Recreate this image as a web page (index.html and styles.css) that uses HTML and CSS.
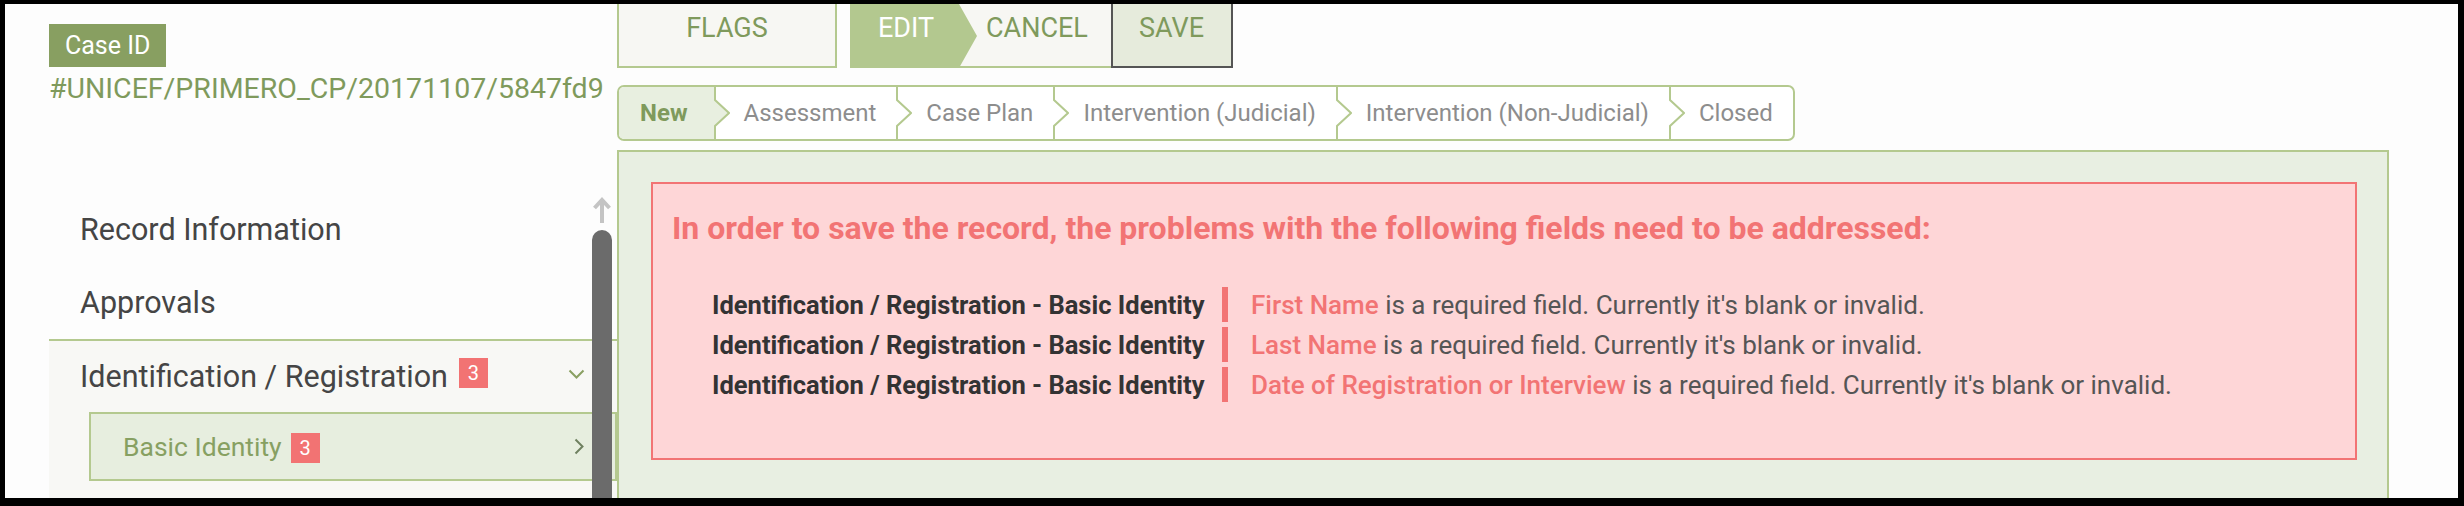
FILE: index.html
```html
<!DOCTYPE html>
<html lang="en">
<head>
<meta charset="utf-8">
<title>Case record</title>
<link rel="stylesheet" href="styles.css">
</head>
<body>
<div class="frame">
  <aside class="sidebar">
    <span class="case-label">Case ID</span>
    <div class="case-number">#UNICEF/PRIMERO_CP/20171107/5847fd9</div>
    <nav class="nav">
      <div class="nav-item">Record Information</div>
      <div class="nav-item">Approvals</div>
      <div class="nav-group">
        <div class="nav-item group-head">
          <span>Identification / Registration</span>
          <span class="badge badge-up">3</span>
          <svg class="chev-down" width="17" height="11" viewBox="0 0 17 11"><path d="M1.5 1.5 L8.5 8.5 L15.5 1.5" fill="none" stroke="#8aa062" stroke-width="2"/></svg>
        </div>
        <div class="sub-item">
          <span>Basic Identity</span>
          <span class="badge">3</span>
          <svg class="chev-right" width="11" height="17" viewBox="0 0 11 17"><path d="M1.5 1.5 L8.5 8.5 L1.5 15.5" fill="none" stroke="#6f8060" stroke-width="2"/></svg>
        </div>
      </div>
      <div class="scrollbar">
        <svg class="scroll-up" width="20" height="26" viewBox="0 0 20 26"><path d="M2.5 11 L10 3 L17.5 11 M10 3.5 V26" fill="none" stroke="#c4c4c4" stroke-width="4"/></svg>
        <div class="thumb"></div>
      </div>
    </nav>
  </aside>

  <main class="main">
    <div class="toolbar">
      <div class="btn btn-flags">FLAGS</div>
      <div class="btn btn-edit">EDIT</div>
      <div class="btn btn-cancel">CANCEL</div>
      <div class="btn btn-save">SAVE</div>
    </div>

    <div class="stepper">
      <div class="step step-active">New</div>
      <svg class="sep" width="16" height="52" viewBox="0 0 16 52"><path d="M0 0 H1 V13 L15 26 L1 39 V52 H0 Z" fill="#e8efe0"/><path d="M1 0 V13 L15 26 L1 39 V52" fill="none" stroke="#b4c98f" stroke-width="2"/></svg>
      <div class="step">Assessment</div>
      <svg class="sep" width="16" height="52" viewBox="0 0 16 52"><path d="M1 0 V13 L15 26 L1 39 V52" fill="none" stroke="#b4c98f" stroke-width="2"/></svg>
      <div class="step">Case Plan</div>
      <svg class="sep" width="16" height="52" viewBox="0 0 16 52"><path d="M1 0 V13 L15 26 L1 39 V52" fill="none" stroke="#b4c98f" stroke-width="2"/></svg>
      <div class="step">Intervention (Judicial)</div>
      <svg class="sep" width="16" height="52" viewBox="0 0 16 52"><path d="M1 0 V13 L15 26 L1 39 V52" fill="none" stroke="#b4c98f" stroke-width="2"/></svg>
      <div class="step">Intervention (Non-Judicial)</div>
      <svg class="sep" width="16" height="52" viewBox="0 0 16 52"><path d="M1 0 V13 L15 26 L1 39 V52" fill="none" stroke="#b4c98f" stroke-width="2"/></svg>
      <div class="step step-last">Closed</div>
    </div>

    <section class="panel">
      <div class="error-box">
        <h2 class="error-title">In order to save the record, the problems with the following fields need to be addressed:</h2>
        <div class="error-rows">
          <div class="error-row">
            <span class="error-section">Identification / Registration - Basic Identity</span>
            <span class="error-bar"></span>
            <span class="error-msg"><span class="field">First Name</span> is a required field. Currently it's blank or invalid.</span>
          </div>
          <div class="error-row">
            <span class="error-section">Identification / Registration - Basic Identity</span>
            <span class="error-bar"></span>
            <span class="error-msg"><span class="field">Last Name</span> is a required field. Currently it's blank or invalid.</span>
          </div>
          <div class="error-row">
            <span class="error-section">Identification / Registration - Basic Identity</span>
            <span class="error-bar"></span>
            <span class="error-msg"><span class="field">Date of Registration or Interview</span> is a required field. Currently it's blank or invalid.</span>
          </div>
        </div>
      </div>
    </section>
  </main>
</div>
</body>
</html>
```

FILE: styles.css
```css
html, body {
  margin: 0;
  padding: 0;
  background: #000;
  height: 506px;
  overflow: hidden;
}

.frame {
  margin: 4px 0 0 5px;
  width: 2453px;
  height: 494px;
  background: #fdfdfd;
  display: flex;
  overflow: hidden;
  font-family: Roboto, "Liberation Sans", Arial, sans-serif;
}

/* ---------- sidebar ---------- */
.sidebar {
  flex: none;
  width: 612px;
  box-sizing: border-box;
  padding-left: 44px;
  display: flex;
  flex-direction: column;
}

.case-label {
  align-self: flex-start;
  margin-top: 20px;
  height: 43px;
  line-height: 43px;
  padding: 0 16px;
  background: #889f61;
  color: #fff;
  font-size: 25px;
}

.case-number {
  margin-top: 5px;
  font-size: 28.5px;
  line-height: 34px;
  color: #7f9a5c;
  white-space: nowrap;
}

.nav {
  position: relative;
  margin-top: 87px;
  flex: 1;
}

.nav-item {
  height: 73px;
  display: flex;
  align-items: center;
  padding-left: 31px;
  font-size: 30.5px;
  color: #454545;
}

.nav-group {
  border-top: 2px solid #b4c98f;
  background: #f8f8f5;
  height: 400px;
}

.group-head {
  height: 71px;
}

.badge {
  display: inline-block;
  width: 29px;
  height: 30px;
  line-height: 30px;
  text-align: center;
  background: #f27373;
  color: #fff;
  font-size: 20px;
  margin-left: 11px;
}

.badge-up {
  margin-bottom: 7px;
}

.chev-down {
  margin-left: auto;
  margin-right: 32px;
  margin-bottom: 4px;
}

.sub-item {
  margin-left: 40px;
  height: 69px;
  box-sizing: border-box;
  border: 2px solid #b4c98f;
  background: #e7eedf;
  display: flex;
  align-items: center;
  padding-left: 32px;
  font-size: 26.5px;
  color: #87a062;
}

.sub-item .badge {
  margin-left: 9px;
  margin-top: 3px;
}

.chev-right {
  margin-left: auto;
  margin-right: 30px;
}

.scrollbar {
  position: absolute;
  top: 4px;
  right: 5px;
  width: 20px;
  display: flex;
  flex-direction: column;
  align-items: center;
}

.scroll-up {
  display: block;
}

.thumb {
  margin-top: 7px;
  width: 20px;
  height: 320px;
  border-radius: 10px 10px 0 0;
  background: #6b6b6b;
}

/* ---------- main ---------- */
.main {
  flex: none;
  width: 1772px;
  display: flex;
  flex-direction: column;
}

.toolbar {
  display: flex;
  height: 64px;
}

.btn {
  box-sizing: border-box;
  height: 64px;
  font-size: 27px;
  line-height: 48px;
  color: #7f9a5c;
  white-space: nowrap;
}

.btn-flags {
  width: 220px;
  text-align: center;
  background: #f7f7f3;
  border: 2px solid #b4c98f;
  border-top: none;
}

.btn-edit {
  position: relative;
  z-index: 1;
  margin-left: 13px;
  width: 127px;
  padding-left: 28px;
  background: #b3c88f;
  color: #fff;
  clip-path: polygon(0 0, 109px 0, 127px 50%, 109px 100%, 0 100%);
}

.btn-cancel {
  margin-left: -18px;
  width: 152px;
  padding-left: 27px;
  background: #f7f7f3;
  border-bottom: 2px solid #b4c98f;
}

.btn-save {
  width: 122px;
  padding-left: 26px;
  background: #e6ebdc;
  border: 2px solid #555;
  border-top: none;
}

.stepper {
  align-self: flex-start;
  margin-top: 17px;
  height: 56px;
  box-sizing: border-box;
  border: 2px solid #b4c98f;
  border-radius: 7px;
  overflow: hidden;
  display: flex;
  background: #fff;
}

.step {
  display: flex;
  align-items: center;
  padding: 0 20px 0 14px;
  font-size: 24px;
  color: #8d8d8d;
  white-space: nowrap;
}

.step-active {
  padding-left: 21px;
  padding-right: 26px;
  background: #e8efe0;
  color: #7f9a5c;
  font-weight: 700;
}

.step-last {
  padding-right: 20px;
}

.sep {
  display: block;
  flex: none;
}

.panel {
  flex: 1;
  margin-top: 9px;
  border: 2px solid #b4c98f;
  border-bottom: none;
  background: #e8efe2;
  padding: 30px 30px 0 32px;
}

.error-box {
  border: 2px solid #f27474;
  background: #fed6d7;
  padding: 25px 20px 56px 19px;
}

.error-title {
  margin: 0;
  font-size: 32px;
  line-height: 38px;
  font-weight: 700;
  color: #f27474;
  white-space: nowrap;
}

.error-rows {
  margin-top: 40px;
  padding-left: 40px;
}

.error-row {
  display: flex;
  align-items: center;
  height: 35px;
}

.error-row + .error-row {
  margin-top: 5px;
}

.error-section {
  width: 493px;
  font-size: 25.5px;
  font-weight: 700;
  color: #333;
  white-space: nowrap;
}

.error-bar {
  align-self: stretch;
  width: 6px;
  margin-left: 17px;
  background: #f27474;
}

.error-msg {
  margin-left: 23px;
  font-size: 26px;
  color: #555;
  white-space: nowrap;
}

.field {
  color: #f27474;
  font-weight: 500;
}
```
